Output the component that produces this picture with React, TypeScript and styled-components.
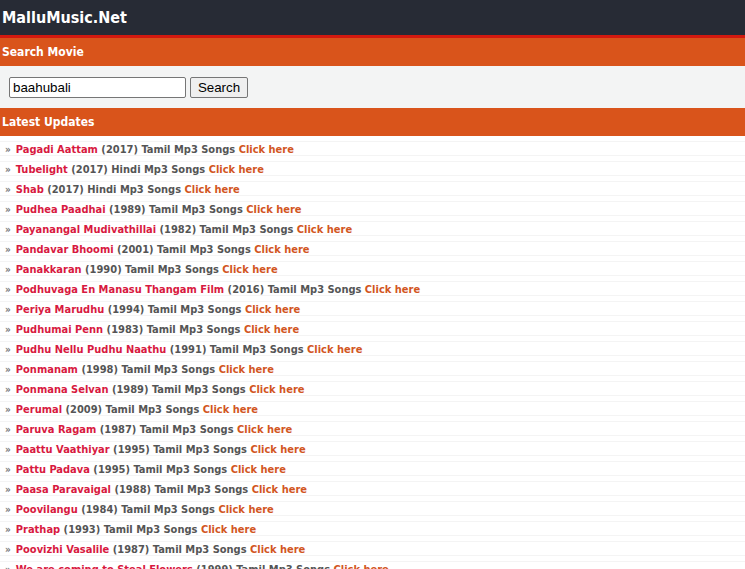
import React from 'react';
import styled, { createGlobalStyle } from "styled-components";

const songs = [
    { title: 'Pagadi Aattam', year: 2017, lang: 'Tamil' },
    { title: 'Tubelight', year: 2017, lang: 'Hindi' },
    { title: 'Shab', year: 2017, lang: 'Hindi' },
    { title: 'Pudhea Paadhai', year: 1989, lang: 'Tamil' },
    { title: 'Payanangal Mudivathillai', year: 1982, lang: 'Tamil' },
    { title: 'Pandavar Bhoomi', year: 2001, lang: 'Tamil' },
    { title: 'Panakkaran', year: 1990, lang: 'Tamil' },
    { title: 'Podhuvaga En Manasu Thangam Film', year: 2016, lang: 'Tamil' },
    { title: 'Periya Marudhu', year: 1994, lang: 'Tamil' },
    { title: 'Pudhumai Penn', year: 1983, lang: 'Tamil' },
    { title: 'Pudhu Nellu Pudhu Naathu', year: 1991, lang: 'Tamil' },
    { title: 'Ponmanam', year: 1998, lang: 'Tamil' },
    { title: 'Ponmana Selvan', year: 1989, lang: 'Tamil' },
    { title: 'Perumal', year: 2009, lang: 'Tamil' },
    { title: 'Paruva Ragam', year: 1987, lang: 'Tamil' },
    { title: 'Paattu Vaathiyar', year: 1995, lang: 'Tamil' },
    { title: 'Pattu Padava', year: 1995, lang: 'Tamil' },
    { title: 'Paasa Paravaigal', year: 1988, lang: 'Tamil' },
    { title: 'Poovilangu', year: 1984, lang: 'Tamil' },
    { title: 'Prathap', year: 1993, lang: 'Tamil' },
    { title: 'Poovizhi Vasalile', year: 1987, lang: 'Tamil' },
    { title: 'We are coming to Steal Flowers', year: 1999, lang: 'Tamil' },
]

const GlobalStyle = createGlobalStyle`
    body {
        margin: 0;
        background: #fff;
        font-family: "DejaVu Sans", sans-serif;
        font-stretch: condensed;
    }
`
const Header = styled.div`
    background: #272b35;
    border-bottom: 3px solid #d3190f;
    height: 35px;
    display: flex;
    align-items: center;
    padding-left: 2px;
`
const Logo = styled.div`
    color: #fff;
    font-weight: bold;
    font-size: 16px;
`
const Bar = styled.div`
    background: #d9541b;
    color: #fff;
    font-weight: bold;
    font-size: 12px;
    height: 28px;
    display: flex;
    align-items: center;
    padding-left: 2px;
`
const SearchBox = styled.form`
    background: #f3f4f4;
    height: 42px;
    display: flex;
    align-items: center;
    gap: 4px;
    padding-left: 9px;
`
const Input = styled.input`
    width: 177px;
    height: 21px;
    box-sizing: border-box;
    border: 1px solid #767676;
    border-radius: 2px;
    font-family: "Liberation Sans", Arial, sans-serif;
    font-size: 13.33px;
    padding: 1px 3px;
    background: #fff;
`
const Button = styled.button`
    width: 58px;
    height: 21px;
    box-sizing: border-box;
    border: 1px solid #767676;
    border-radius: 2px;
    background: #efefef;
    font-family: "Liberation Sans", Arial, sans-serif;
    font-size: 13.33px;
    padding: 0;
`
const List = styled.div`
    padding-top: 5px;
`
const Row = styled.div`
    border-top: 1px solid #f4f4f4;
    border-bottom: 1px solid #f4f4f4;
    height: 13px;
    line-height: 15px;
    margin-bottom: 5px;
    padding-left: 5px;
    font-size: 11px;
    font-weight: bold;
    color: #555;
    white-space: nowrap;
`
const Arrow = styled.span`
    color: #777;
    font-size: 10px;
    margin-right: 5px;
`
const Name = styled.a`
    color: #d81940;
    text-decoration: none;
`
const Click = styled.a`
    color: #d2561f;
    text-decoration: none;
`

function App() {
    return (
        <>
            <GlobalStyle />
            <Header>
                <Logo>MalluMusic.Net</Logo>
            </Header>
            <Bar>Search Movie</Bar>
            <SearchBox onSubmit={e => e.preventDefault()}>
                <Input defaultValue="baahubali" />
                <Button>Search</Button>
            </SearchBox>
            <Bar>Latest Updates</Bar>
            <List>
                {songs.map((song, index) => (
                    <Row key={index}>
                        <Arrow>»</Arrow>
                        <Name href="#">{song.title}</Name> ({song.year}) {song.lang} Mp3 Songs <Click href="#">Click here</Click>
                    </Row>
                ))}
            </List>
        </>
    );
}

export default App;
